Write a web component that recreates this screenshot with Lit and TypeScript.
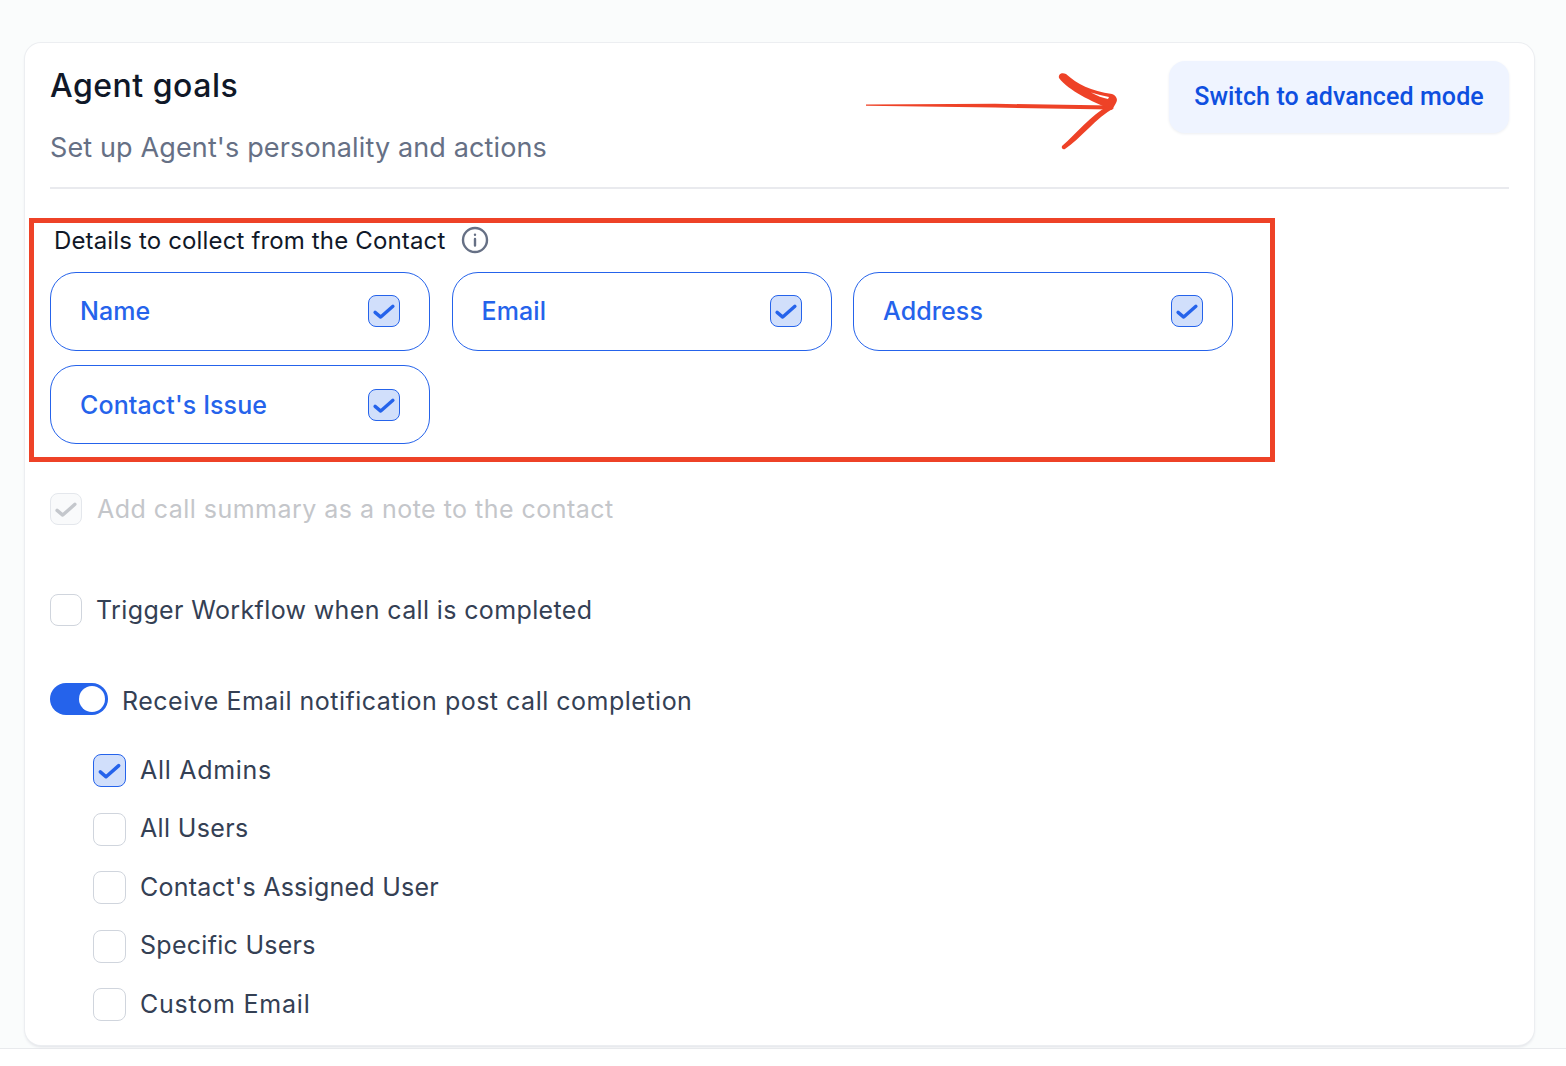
import { LitElement, html, css, svg } from 'lit'
import { customElement } from 'lit/decorators.js'

const CHECK = svg`<path d="M6.5 17.5 12.5 22.5 25.5 11" fill="none" stroke="currentColor" stroke-width="3.6" stroke-linecap="round" stroke-linejoin="round" />`

const DETAILS = ['Name', 'Email', 'Address', "Contact's Issue"]
// label, checked, tracking
const RECIPIENTS: [string, boolean, number][] = [
	['All Admins', true, 0.7],
	['All Users', false, 0.35],
	["Contact's Assigned User", false, 0.26],
	['Specific Users', false, 0.28],
	['Custom Email', false, 0.78],
]

@customElement('app-root')
export class AppRoot extends LitElement {
	static styles = css`
		:host {
			display: block;
			height: 1066px;
			background: #fff;
			font-family: Inter, 'Liberation Sans', sans-serif;
			color: #344054;
		}
		.page {
			box-sizing: border-box;
			height: 1049px;
			padding: 43px 32px 3px 25px;
			background: #fafcfc;
			border-bottom: 1px solid #e8eaed;
		}
		.card {
			position: relative;
			box-sizing: border-box;
			height: 1002px;
			padding: 18px 25px 0;
			background: #fff;
			border-radius: 16px;
			box-shadow: 0 0 0 1px #eceef1, 0 2px 3px #dfe1e6;
		}
		.head {
			display: flex;
			justify-content: space-between;
			height: 126px;
			border-bottom: 2px solid #e9eaee;
		}
		h1 {
			margin: 5px 0 0;
			font-size: 32px;
			line-height: 40px;
			font-weight: 500;
			letter-spacing: 0.5px;
			color: #101828;
		}
		.sub {
			margin: 22px 0 0;
			font-size: 27px;
			line-height: 40px;
			letter-spacing: 0.13px;
			color: #667085;
		}
		.advanced {
			box-sizing: border-box;
			width: 340px;
			height: 72px;
			padding: 0 0 2px;
			border: 0;
			border-radius: 16px;
			background: #eff4ff;
			color: #0e4fe0;
			font: 500 25px Roboto, sans-serif;
			letter-spacing: 0.1px;
			box-shadow: 0 1px 3px #eceef2;
		}
		.label {
			display: flex;
			align-items: center;
			gap: 16px;
			margin: 36px 0 0 4px;
			height: 30px;
			font-size: 24px;
			letter-spacing: 0.15px;
			color: #101828;
		}
		.label svg {
			width: 28px;
			height: 28px;
			color: #667085;
		}
		.chips {
			display: grid;
			grid-template-columns: repeat(3, 380px);
			gap: 14px 21.5px;
			margin-top: 17px;
		}
		.chip {
			box-sizing: border-box;
			display: flex;
			align-items: center;
			justify-content: space-between;
			height: 79px;
			padding: 0 29px 1px;
			border: 1px solid #2563eb;
			border-radius: 26px;
			color: #2563eb;
			font-size: 25px;
			letter-spacing: 0.1px;
			font-weight: 500;
		}
		.chip:nth-child(4) {
			padding-bottom: 0;
		}
		.box {
			box-sizing: border-box;
			flex: none;
			width: 33px;
			height: 33px;
			border: 1.5px solid #d0d5dd;
			border-radius: 8px;
			background: #fff;
			color: #2563eb;
		}
		.chip .box,
		.flat .box {
			width: 32px;
			height: 32px;
		}
		.box.on {
			background: #d1dffb;
			border-color: #2563eb;
		}
		.box.off {
			background: #f9fafb;
			border-color: #e4e7ec;
			color: #c4c7cc;
		}
		.box svg {
			display: block;
			width: 100%;
			height: 100%;
		}
		.row {
			display: flex;
			align-items: center;
			gap: 14px;
			font-size: 25px;
			height: 33px;
		}
		.muted {
			color: #c4c6ca;
			margin-top: 48px;
			letter-spacing: 0.47px;
		}
		.muted.flat {
			gap: 15px;
		}
		.trigger {
			margin-top: 68px;
			letter-spacing: 0.37px;
		}
		.notify {
			gap: 14px;
			margin-top: 58px;
			letter-spacing: 0.5px;
		}
		.toggle {
			position: relative;
			flex: none;
			width: 58px;
			height: 32px;
			margin-bottom: 3px;
			border-radius: 16px;
			background: #2563eb;
		}
		.toggle::after {
			content: '';
			position: absolute;
			top: 3px;
			right: 3px;
			width: 26px;
			height: 26px;
			border-radius: 50%;
			background: #fff;
		}
		.recipients {
			display: flex;
			flex-direction: column;
			gap: 25.6px;
			margin: 36px 0 0 43px;
		}
		.recipients .box {
			margin: 1px 0 -1px;
		}
		.mark {
			position: absolute;
			box-sizing: border-box;
			left: 4px;
			top: 175px;
			width: 1246px;
			height: 244px;
			border: 5px solid #ee4227;
			pointer-events: none;
		}
		.arrow {
			position: absolute;
			left: 840px;
			top: 28px;
			width: 256px;
			height: 84px;
			pointer-events: none;
		}
	`

	private box(cls: string) {
		return html`<span class="box ${cls}"><svg viewBox="0 0 32 32">${cls ? CHECK : ''}</svg></span>`
	}

	render() {
		return html`
			<div class="page">
				<section class="card">
					<header class="head">
						<div>
							<h1>Agent goals</h1>
							<p class="sub">Set up Agent's personality and actions</p>
						</div>
						<button class="advanced">Switch to advanced mode</button>
					</header>
					<div class="label">
						Details to collect from the Contact
						<svg viewBox="0 0 28 28" fill="none" stroke="currentColor" stroke-width="2.4" stroke-linecap="round">
							<circle cx="14" cy="14" r="12" />
							<path d="M14 13v6.5M14 8.6v.2" />
						</svg>
					</div>
					<div class="chips">
						${DETAILS.map((d) => html`<div class="chip">${d}${this.box('on')}</div>`)}
					</div>
					<div class="row muted flat">${this.box('off')}Add call summary as a note to the contact</div>
					<div class="row trigger flat">${this.box('')}Trigger Workflow when call is completed</div>
					<div class="row notify"><span class="toggle"></span>Receive Email notification post call completion</div>
					<div class="recipients">
						${RECIPIENTS.map(
							([r, on, ls]) =>
								html`<div class="row" style="letter-spacing:${ls}px">${this.box(on ? 'on' : '')}${r}</div>`,
						)}
					</div>
					<div class="mark"></div>
					<svg class="arrow" viewBox="0 0 256 84" fill="#ee4227">
						<path d="M1 33.4 L130 32.8 L246 34.5 L246 38.5 L130 36.6 L1 34.8Z" />
						<path d="M194 7 C193 3 197 1 201 3 C212 13 226 20 247 23 C252 25 253 29 251 32 L247 39 C226 30 204 20 194 7Z" />
						<path d="M226 21.5 C232 25 238 27 243 28 L244 26 C238 25 232 23 226 21.5Z" fill="#fff" />
						<path
							d="M243 35 L249 37 C232 46 215 68 200 78 C198 79 196 77 197 75 C212 62 226 44 243 35Z"
						/>
					</svg>
				</section>
			</div>
		`
	}
}
